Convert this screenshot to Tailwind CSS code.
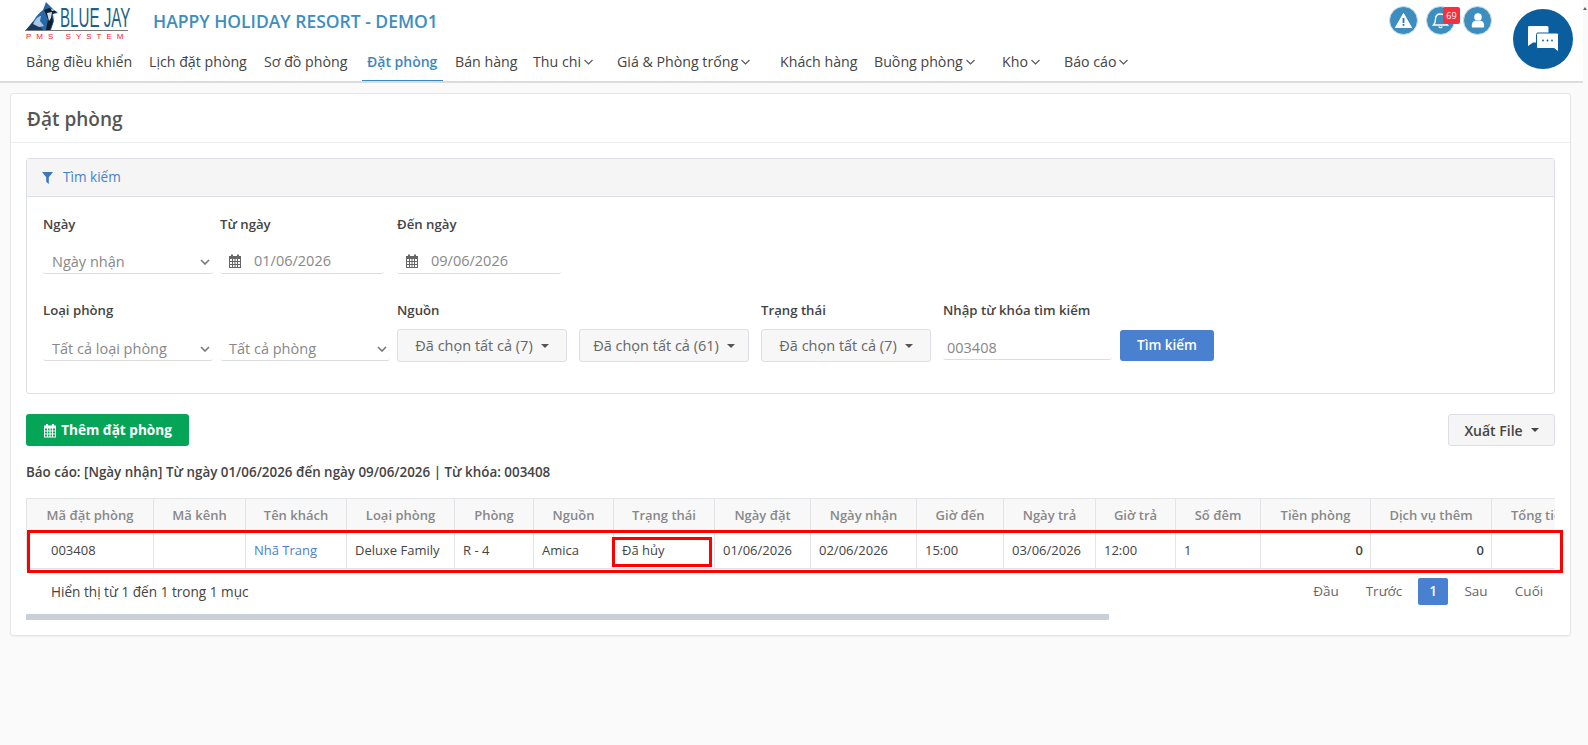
<!DOCTYPE html>
<html lang="vi"><head><meta charset="utf-8">
<script src="https://cdn.jsdelivr.net/npm/@tailwindcss/browser@4"></script>
<title>Đặt phòng</title></head>
<body class="bg-[#fafafa] w-[1588px] h-[745px] overflow-hidden text-[14px] text-[#444] font-['Open_Sans','Noto_Sans',sans-serif]">
<div class="flex h-[745px]">
<div class="w-[1583px] shrink-0">
<!-- header -->
<header class="relative bg-white h-[83px] border-b-2 border-[#dcdcdc]">
  <div class="flex items-center h-[42px] pl-[25px]">
    <div class="w-[105px] h-[40px] shrink-0 relative">
      <svg class="absolute left-0 top-0" width="36" height="30" viewBox="0 0 36 30">
        <path d="M1 29 L9 19 C12 14 15 11 18 9 L21 1 L24 4 L28 8 L33 12 L28 13 L29 20 L26 29 Z" fill="#2868a8"/>
        <path d="M1 29 L8 21 L13 23 L18 29 Z" fill="#1c3a5e"/>
        <path d="M8 23 C11 17 14 15 16 15 L15 20 L19 25 L14 26 Z" fill="#a9c6e6"/>
        <path d="M19 9 L24 7 L32 11 L27 13 L28 21 L25 29 L21 29 L23 18 Z" fill="#10202f"/>
        <path d="M22 12 L27 11 L26 17 L24 20 Z" fill="#d9dde2"/>
        <path d="M26 8 L30 9 L27 10 Z" fill="#f2f2f2"/>
      </svg>
      <span class="absolute left-[35px] top-[2px] text-[#1d6088] text-[27px] leading-[30px] font-['Liberation_Sans',sans-serif] scale-x-[0.56] origin-left whitespace-nowrap">BLUE JAY</span>
      <div class="absolute left-0 top-[29px] w-[103px] h-px bg-[#777]"></div>
      <span class="absolute left-[1px] top-[31px] text-[#f0202e] text-[8px] leading-[9px] tracking-[5px] font-['Liberation_Sans',sans-serif] whitespace-nowrap">PMS SYSTEM</span>
    </div>
    <div class="ml-[23px] text-[17.5px] font-semibold leading-[24px] text-[#3d8ebf] whitespace-nowrap">HAPPY HOLIDAY RESORT - DEMO1</div>
  </div>
  <nav class="flex items-center h-[38px] mt-[1px] pl-[21px] text-[14.2px] text-[#444] whitespace-nowrap">
    <a class="px-[5px] h-[38px] leading-[38px] w-[123px]">Bảng điều khiển</a>
    <a class="px-[5px] h-[38px] leading-[38px] w-[115px]">Lịch đặt phòng</a>
    <a class="px-[5px] h-[38px] leading-[38px] w-[103px]">Sơ đồ phòng</a>
    <a class="px-[5px] h-[38px] leading-[38px] w-[81px] text-[#3d87c0] font-semibold border-b border-[#3d87c0] text-[14px]">Đặt phòng</a>
    <a class="ml-[7px] px-[5px] h-[38px] leading-[38px] w-[78px]">Bán hàng</a>
    <a class="px-[5px] h-[38px] leading-[38px] w-[84px] flex items-center">Thu chi<svg class="ml-[3px]" width="9" height="6" viewBox="0 0 9 6" fill="none" stroke="#555" stroke-width="1.1"><path d="M.5 1l4 4 4-4"/></svg></a>
    <a class="px-[5px] h-[38px] leading-[38px] w-[163px] flex items-center">Giá &amp; Phòng trống<svg class="ml-[3px]" width="9" height="6" viewBox="0 0 9 6" fill="none" stroke="#555" stroke-width="1.1"><path d="M.5 1l4 4 4-4"/></svg></a>
    <a class="px-[5px] h-[38px] leading-[38px] w-[94px]">Khách hàng</a>
    <a class="px-[5px] h-[38px] leading-[38px] w-[128px] flex items-center">Buồng phòng<svg class="ml-[3px]" width="9" height="6" viewBox="0 0 9 6" fill="none" stroke="#555" stroke-width="1.1"><path d="M.5 1l4 4 4-4"/></svg></a>
    <a class="px-[5px] h-[38px] leading-[38px] w-[62px] flex items-center">Kho<svg class="ml-[3px]" width="9" height="6" viewBox="0 0 9 6" fill="none" stroke="#555" stroke-width="1.1"><path d="M.5 1l4 4 4-4"/></svg></a>
    <a class="px-[5px] h-[38px] leading-[38px] flex items-center">Báo cáo<svg class="ml-[3px]" width="9" height="6" viewBox="0 0 9 6" fill="none" stroke="#555" stroke-width="1.1"><path d="M.5 1l4 4 4-4"/></svg></a>
  </nav>
  <!-- top icons -->
  <div class="absolute left-[1389px] top-[6px] flex gap-[8px]">
    <div class="w-[29px] h-[29px] rounded-full bg-[#3d8ebf] border border-[#cfe0ea] flex items-center justify-center">
      <svg width="17" height="15" viewBox="0 0 17 15"><path d="M8.5 .5 L16.5 14.5 H.5 Z" fill="#fff" stroke="#fff" stroke-linejoin="round"/><rect x="7.6" y="5" width="1.8" height="5" fill="#3d6fa8"/><rect x="7.6" y="11" width="1.8" height="1.8" fill="#3d6fa8"/></svg>
    </div>
    <div class="w-[29px] h-[29px] rounded-full bg-[#3d8ebf] border border-[#cfe0ea] flex items-center justify-center">
      <svg width="17" height="17" viewBox="0 0 17 17" fill="none" stroke="#fff" stroke-width="1.3"><path d="M1.5 13 H15.5 C13.8 11.5 13.5 10 13.5 7 C13.5 4 11.5 2 8.5 2 C5.5 2 3.5 4 3.5 7 C3.5 10 3.2 11.5 1.5 13 Z"/><path d="M6.8 14.5 a1.8 1.8 0 0 0 3.4 0"/></svg>
    </div>
    <div class="w-[29px] h-[29px] rounded-full bg-[#3d8ebf] border border-[#cfe0ea] flex items-center justify-center">
      <svg width="14" height="15" viewBox="0 0 14 15" fill="#fff"><circle cx="7" cy="4" r="3.8"/><path d="M1 14.5 C0 9.5 3 8 4.5 7.5 C6 8.5 8 8.5 9.5 7.5 C11 8 14 9.5 13 14.5 Z"/></svg>
    </div>
  </div>
  <div class="absolute left-[1443px] top-[7px] w-[17px] h-[17px] rounded-[2px] bg-[#f5303f] text-white text-[9px] leading-[17px] text-center">69</div>
  <div class="absolute left-[1513px] top-[9px] w-[60px] h-[60px] rounded-full bg-[#0b5e9e] flex items-center justify-center">
    <svg width="32" height="28" viewBox="0 0 32 28">
      <path d="M2 1 H20 a1.5 1.5 0 0 1 1.5 1.5 V16 a1.5 1.5 0 0 1 -1.5 1.5 H6 L1 21 V2.5 A1.5 1.5 0 0 1 2 1 Z" fill="#fff"/>
      <path d="M11 8 H30 a1.5 1.5 0 0 1 1.5 1.5 V24.5 V27 L27 23.5 H11 a1.5 1.5 0 0 1 -1.5 -1.5 V9.5 A1.5 1.5 0 0 1 11 8 Z" fill="#fff" stroke="#0b5e9e" stroke-width="1"/>
      <circle cx="16" cy="15.5" r=".9" fill="#0b5e9e"/><circle cx="20.5" cy="15.5" r=".9" fill="#0b5e9e"/><circle cx="25" cy="15.5" r=".9" fill="#0b5e9e"/>
    </svg>
  </div>
</header>

<!-- card -->
<main class="mt-[10px] ml-[10px] w-[1561px] h-[543px] bg-white border border-[#e3e5e8] rounded-[3px] shadow-[0_1px_1px_rgba(0,0,0,0.04)]">
  <div class="h-[49px] border-b border-[#eceef0] pl-[16px] pt-[2px] flex items-center text-[19px] font-semibold text-[#555]">Đặt phòng</div>
  <div class="px-[15px] pt-[15px]">
    <!-- search panel -->
    <section class="w-[1529px] h-[236px] border border-[#dcdfe3] rounded-[3px]">
      <div class="h-[38px] bg-[#f5f5f5] border-b border-[#dcdfe3] pl-[15px] flex items-center gap-[10px] text-[13.6px] text-[#4a7fc9] font-medium">
        <svg width="11" height="12" viewBox="0 0 11 12" fill="#3a78c0"><path d="M0 0 H11 L6.8 5.2 V12 L4.2 9.8 V5.2 Z"/></svg>
        Tìm kiếm
      </div>
      <div class="pl-[16px] pt-[17px]">
        <div class="flex">
          <div class="w-[170px] mr-[7px]">
            <div class="h-[20px] leading-[20px] text-[13.2px] font-semibold text-[#444]">Ngày</div>
            <div class="mt-[15px] h-[25px] pl-[9px] pr-[3px] pt-[1px] border-b border-[#ddd] rounded-[3px] flex items-center justify-between text-[14.5px] text-[#888]">Ngày nhận<svg width="10" height="6" viewBox="0 0 10 6" fill="none" stroke="#777" stroke-width="1.6"><path d="M1 1l4 4 4-4"/></svg></div>
          </div>
          <div class="w-[164px] mr-[13px]">
            <div class="h-[20px] leading-[20px] text-[13.2px] font-semibold text-[#444]">Từ ngày</div>
            <div class="mt-[15px] h-[25px] pl-[8px] border-b border-[#ddd] rounded-[3px] flex items-center gap-[12px] text-[14.5px] text-[#888]">
              <svg width="14" height="14" viewBox="0 0 14 14" fill="#666"><path d="M1 2 H3 V0.5 H5 V2 H9 V0.5 H11 V2 H13 V14 H1 Z M2 5 V7 H4 V5 Z M5 5 V7 H6.5 V5 Z M7.5 5 V7 H9 V5 Z M10 5 V7 H12 V5 Z M2 8 V10 H4 V8 Z M5 8 V10 H6.5 V8 Z M7.5 8 V10 H9 V8 Z M10 8 V10 H12 V8 Z M2 11 V13 H4 V11 Z M5 11 V13 H6.5 V11 Z M7.5 11 V13 H9 V11 Z M10 11 V13 H12 V11 Z" fill-rule="evenodd"/></svg>
              01/06/2026
            </div>
          </div>
          <div class="w-[164px]">
            <div class="h-[20px] leading-[20px] text-[13.2px] font-semibold text-[#444]">Đến ngày</div>
            <div class="mt-[15px] h-[25px] pl-[8px] border-b border-[#ddd] rounded-[3px] flex items-center gap-[12px] text-[14.5px] text-[#888]">
              <svg width="14" height="14" viewBox="0 0 14 14" fill="#666"><path d="M1 2 H3 V0.5 H5 V2 H9 V0.5 H11 V2 H13 V14 H1 Z M2 5 V7 H4 V5 Z M5 5 V7 H6.5 V5 Z M7.5 5 V7 H9 V5 Z M10 5 V7 H12 V5 Z M2 8 V10 H4 V8 Z M5 8 V10 H6.5 V8 Z M7.5 8 V10 H9 V8 Z M10 8 V10 H12 V8 Z M2 11 V13 H4 V11 Z M5 11 V13 H6.5 V11 Z M7.5 11 V13 H9 V11 Z M10 11 V13 H12 V11 Z" fill-rule="evenodd"/></svg>
              09/06/2026
            </div>
          </div>
        </div>
        <div class="flex mt-[26px]">
          <div class="w-[170px] mr-[7px]">
            <div class="h-[20px] leading-[20px] text-[13.2px] font-semibold text-[#444]">Loại phòng</div>
            <div class="mt-[16px] h-[25px] pl-[9px] pr-[3px] pt-[1px] border-b border-[#ddd] rounded-[3px] flex items-center justify-between text-[14.5px] text-[#888]">Tất cả loại phòng<svg width="10" height="6" viewBox="0 0 10 6" fill="none" stroke="#777" stroke-width="1.6"><path d="M1 1l4 4 4-4"/></svg></div>
          </div>
          <div class="w-[170px] mr-[7px] pt-[36px]">
            <div class="h-[25px] pl-[9px] pr-[3px] pt-[1px] border-b border-[#ddd] rounded-[3px] flex items-center justify-between text-[14.5px] text-[#888]">Tất cả phòng<svg width="10" height="6" viewBox="0 0 10 6" fill="none" stroke="#777" stroke-width="1.6"><path d="M1 1l4 4 4-4"/></svg></div>
          </div>
          <div class="w-[170px] mr-[12px]">
            <div class="h-[20px] leading-[20px] text-[13.2px] font-semibold text-[#444]">Nguồn</div>
            <div class="mt-[9px] h-[33px] bg-[#f7f7f7] border border-[#dcdfe3] rounded-[3px] flex items-center justify-center gap-[8px] text-[#666] text-[14.5px]">Đã chọn tất cả (7)<span class="w-0 h-0 border-x-[4px] border-x-transparent border-t-[4px] border-t-[#555]"></span></div>
          </div>
          <div class="w-[170px] mr-[12px] pt-[29px]">
            <div class="h-[33px] bg-[#f7f7f7] border border-[#dcdfe3] rounded-[3px] flex items-center justify-center gap-[8px] text-[#666] text-[14.5px]">Đã chọn tất cả (61)<span class="w-0 h-0 border-x-[4px] border-x-transparent border-t-[4px] border-t-[#555]"></span></div>
          </div>
          <div class="w-[170px] mr-[12px]">
            <div class="h-[20px] leading-[20px] text-[13.2px] font-semibold text-[#444]">Trạng thái</div>
            <div class="mt-[9px] h-[33px] bg-[#f7f7f7] border border-[#dcdfe3] rounded-[3px] flex items-center justify-center gap-[8px] text-[#666] text-[14.5px]">Đã chọn tất cả (7)<span class="w-0 h-0 border-x-[4px] border-x-transparent border-t-[4px] border-t-[#555]"></span></div>
          </div>
          <div class="w-[169px] mr-[8px]">
            <div class="h-[20px] leading-[20px] text-[13.2px] font-semibold text-[#444] whitespace-nowrap">Nhập từ khóa tìm kiếm</div>
            <div class="mt-[15px] h-[25px] pl-[4px] pt-[1px] border-b border-[#ddd] rounded-[3px] flex items-center text-[14.5px] text-[#888]">003408</div>
          </div>
          <div class="pt-[30px]">
            <div class="w-[94px] h-[31px] bg-[#4a80d0] rounded-[3px] text-white text-[13.5px] font-semibold flex items-center justify-center">Tìm kiếm</div>
          </div>
        </div>
      </div>
    </section>
    <!-- actions -->
    <div class="flex justify-between mt-[20px] w-[1529px]">
      <div class="w-[163px] h-[32px] bg-[#05a558] rounded-[3px] text-white font-bold text-[13.6px] flex items-center justify-center gap-[4px]">
        <svg width="14" height="15" viewBox="0 0 14 14" fill="#fff"><path d="M1 2 H3 V0.5 H5 V2 H9 V0.5 H11 V2 H13 V14 H1 Z M2 5 V7 H4 V5 Z M5 5 V7 H6.5 V5 Z M7.5 5 V7 H9 V5 Z M10 5 V7 H12 V5 Z M2 8 V10 H4 V8 Z M5 8 V10 H6.5 V8 Z M7.5 8 V10 H9 V8 Z M10 8 V10 H12 V8 Z M2 11 V13 H4 V11 Z M5 11 V13 H6.5 V11 Z M7.5 11 V13 H9 V11 Z M10 11 V13 H12 V11 Z" fill-rule="evenodd"/></svg>
        Thêm đặt phòng
      </div>
      <div class="w-[107px] h-[32px] bg-[#f5f5f5] border border-[#dcdfe3] rounded-[3px] text-[#444] font-semibold text-[14px] flex items-center justify-center gap-[8px]">Xuất File<span class="w-0 h-0 border-x-[4px] border-x-transparent border-t-[4px] border-t-[#444]"></span></div>
    </div>
    <div class="mt-[16px] h-[20px] leading-[20px] text-[13.4px] font-semibold text-[#444] whitespace-nowrap">Báo cáo: [Ngày nhận] Từ ngày 01/06/2026 đến ngày 09/06/2026 | Từ khóa: 003408</div>
    <!-- table -->
    <div class="relative w-[1529px] mt-[16px]">
      <div class="w-[1529px] overflow-hidden">
        <table class="table-fixed border-collapse w-[1600px] text-[13px]">
          <colgroup><col class="w-[127px]"><col class="w-[92px]"><col class="w-[101px]"><col class="w-[108px]"><col class="w-[79px]"><col class="w-[80px]"><col class="w-[101px]"><col class="w-[96px]"><col class="w-[106px]"><col class="w-[87px]"><col class="w-[92px]"><col class="w-[80px]"><col class="w-[85px]"><col class="w-[110px]"><col class="w-[121px]"><col></colgroup>
          <thead>
            <tr class="h-[32px] bg-[#f8f8f9] text-[#888] font-semibold">
              <th class="border border-[#e2e4e8] font-semibold pt-[3px]">Mã đặt phòng</th><th class="border border-[#e2e4e8] font-semibold pt-[3px]">Mã kênh</th><th class="border border-[#e2e4e8] font-semibold pt-[3px]">Tên khách</th><th class="border border-[#e2e4e8] font-semibold pt-[3px]">Loại phòng</th><th class="border border-[#e2e4e8] font-semibold pt-[3px]">Phòng</th><th class="border border-[#e2e4e8] font-semibold pt-[3px]">Nguồn</th><th class="border border-[#e2e4e8] font-semibold pt-[3px]">Trạng thái</th><th class="border border-[#e2e4e8] font-semibold pt-[3px]">Ngày đặt</th><th class="border border-[#e2e4e8] font-semibold pt-[3px]">Ngày nhận</th><th class="border border-[#e2e4e8] font-semibold pt-[3px]">Giờ đến</th><th class="border border-[#e2e4e8] font-semibold pt-[3px]">Ngày trả</th><th class="border border-[#e2e4e8] font-semibold pt-[3px]">Giờ trả</th><th class="border border-[#e2e4e8] font-semibold pt-[3px]">Số đêm</th><th class="border border-[#e2e4e8] font-semibold pt-[3px]">Tiền phòng</th><th class="border border-[#e2e4e8] font-semibold pt-[3px]">Dịch vụ thêm</th><th class="border border-[#e2e4e8] font-semibold text-left pl-[19px] pt-[3px]">Tổng tiền</th>
            </tr>
          </thead>
          <tbody>
            <tr class="h-[38px] text-[#444]">
              <td class="border border-[#e2e4e8] pl-[24px] pt-[3px]">003408</td><td class="border border-[#e2e4e8]"></td><td class="border border-[#e2e4e8] pl-[8px] pt-[3px] text-[#4a7fc9]">Nhã Trang</td><td class="border border-[#e2e4e8] pl-[8px] pt-[3px] whitespace-nowrap">Deluxe Family</td><td class="border border-[#e2e4e8] pl-[8px] pt-[3px]">R - 4</td><td class="border border-[#e2e4e8] pl-[8px] pt-[3px]">Amica</td><td class="border border-[#e2e4e8] pl-[8px] pt-[3px]">Đã hủy</td><td class="border border-[#e2e4e8] pl-[8px] pt-[3px]">01/06/2026</td><td class="border border-[#e2e4e8] pl-[8px] pt-[3px]">02/06/2026</td><td class="border border-[#e2e4e8] pl-[8px] pt-[3px]">15:00</td><td class="border border-[#e2e4e8] pl-[8px] pt-[3px]">03/06/2026</td><td class="border border-[#e2e4e8] pl-[8px] pt-[3px]">12:00</td><td class="border border-[#e2e4e8] pl-[8px] pt-[3px]">1</td><td class="border border-[#e2e4e8] pr-[7px] pt-[3px] text-right font-semibold">0</td><td class="border border-[#e2e4e8] pr-[7px] pt-[3px] text-right font-semibold">0</td><td class="border border-[#e2e4e8]"></td>
            </tr>
          </tbody>
        </table>
      </div>
      <div class="absolute left-[1px] top-[32px] w-[1536px] h-[43px] border-[3px] border-[#f00]"></div>
      <div class="absolute left-[586px] top-[39px] w-[100px] h-[30px] border-[3px] border-[#f00]"></div>
    </div>
    <!-- pagination -->
    <div class="flex items-center w-[1529px] mt-[9px] h-[27px] pl-[25px] pr-[1px]">
      <div class="text-[13.6px] pt-[2px] text-[#444]">Hiển thị từ 1 đến 1 trong 1 mục</div>
      <div class="ml-auto flex items-center text-[13.5px] text-[#666]">
        <span class="w-[58px] text-center">Đầu</span><span class="w-[58px] text-center">Trước</span><span class="ml-[5px] w-[30px] h-[27px] leading-[27px] text-center bg-[#4a80d0] rounded-[2px] text-white font-semibold">1</span><span class="w-[56px] text-center">Sau</span><span class="w-[50px] text-center">Cuối</span>
      </div>
    </div>
    <div class="mt-[9px] w-[1083px] h-[6px] bg-[#cbd0d8]"></div>
  </div>
</main>
</div>
<!-- page scrollbar -->
<div class="w-[5px] shrink-0 bg-[#fafafa] relative">
  <div class="absolute left-0 top-[7px] w-0 h-0 border-x-[2.5px] border-x-transparent border-b-[3px] border-b-[#666]"></div>
</div>
</div>
</body></html>
